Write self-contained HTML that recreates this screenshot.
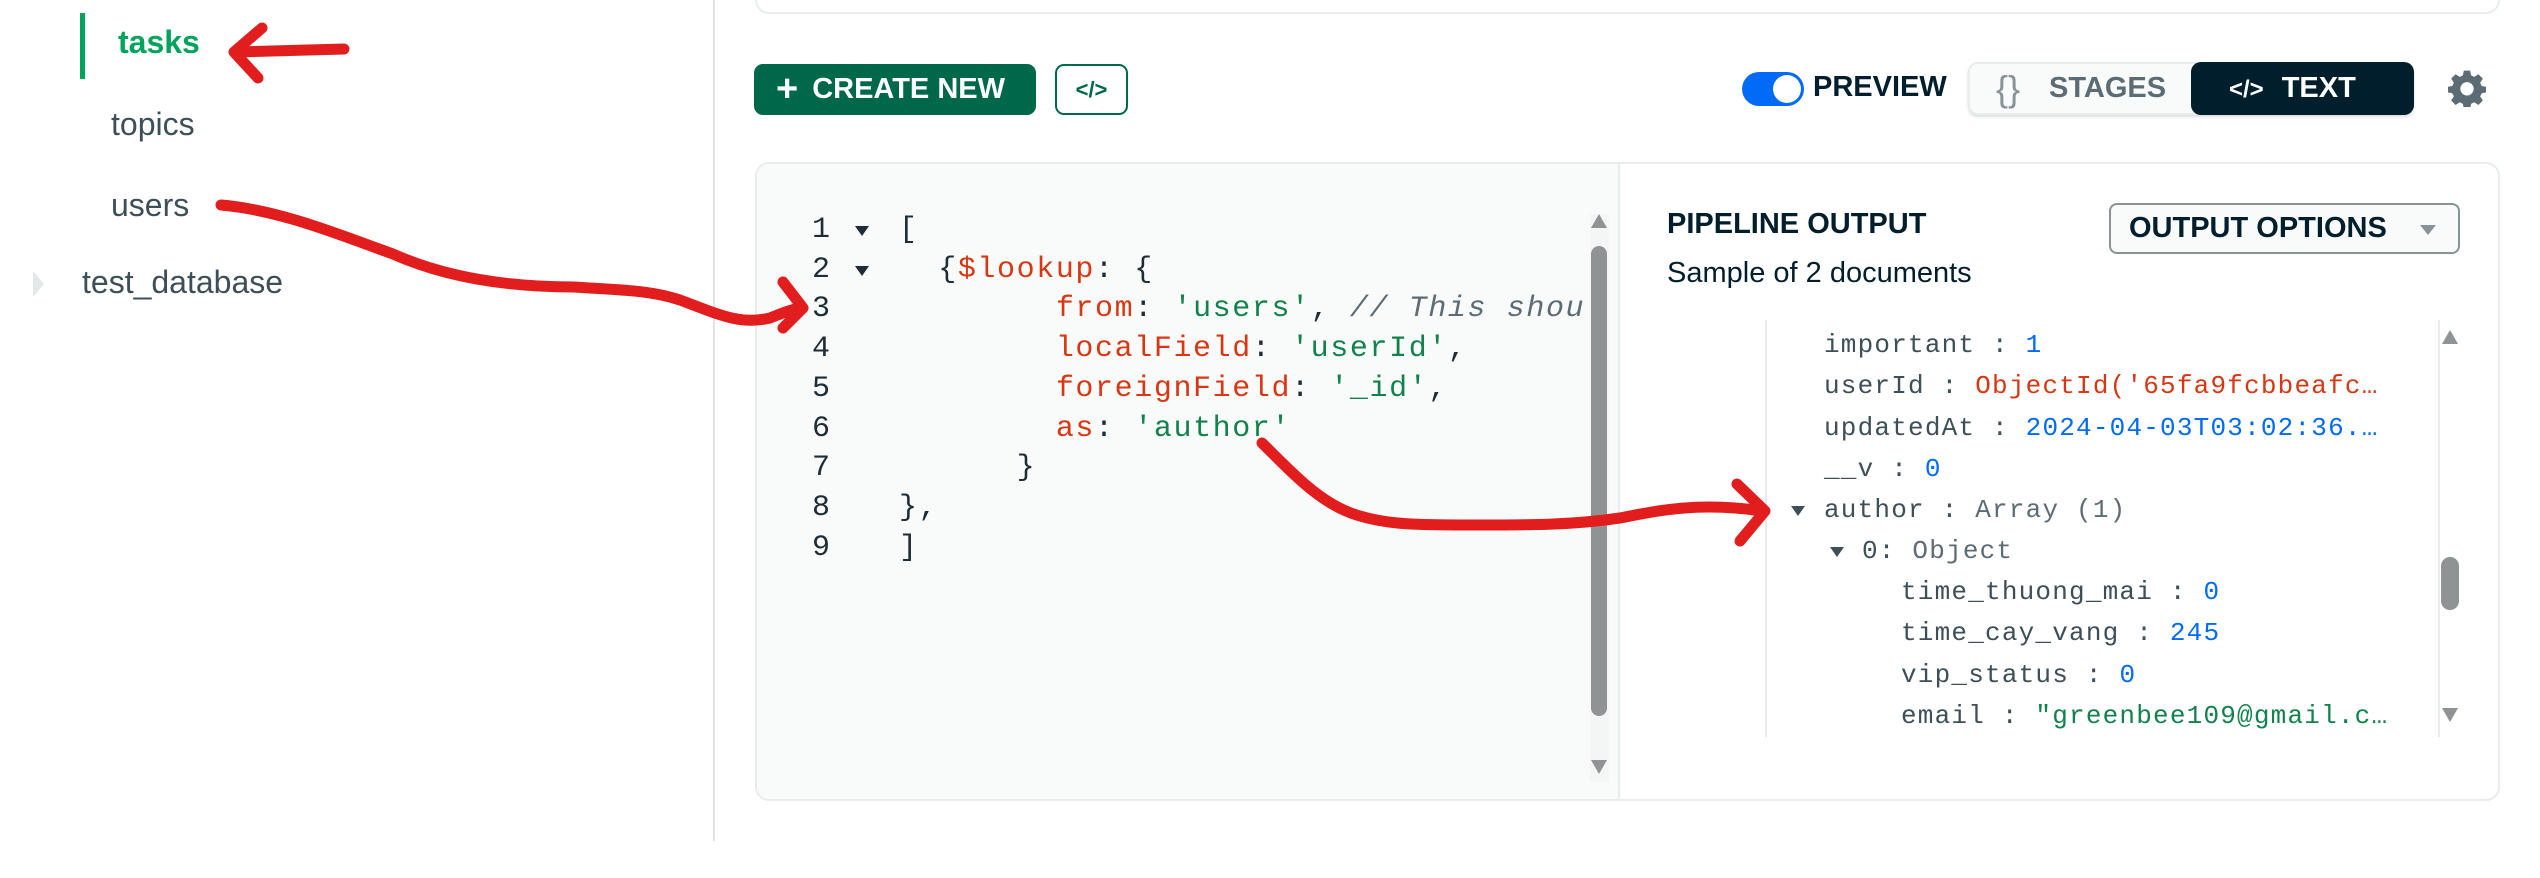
<!DOCTYPE html>
<html><head><meta charset="utf-8"><style>
*{margin:0;padding:0;box-sizing:border-box}
body{width:2540px;height:878px;background:#fff;position:relative;overflow:hidden;font-family:"Liberation Sans",sans-serif;color:#1c2d38}
.a{position:absolute;white-space:nowrap}
.side{font-size:32px;color:#3d4f58}
.mono{font-family:"Liberation Mono",monospace}
.code{font-size:30px;letter-spacing:1.6px;line-height:39.7px;color:#1c2d38;white-space:pre}
.r{color:#d83713}.g{color:#12824d}.b{color:#016bf8}.c{color:#5c6c75;font-style:italic}
.out{font-size:26px;letter-spacing:1.2px;line-height:41.3px;color:#3d4f58}
</style></head><body>
<!-- sidebar -->
<div class="a" style="left:80px;top:13px;width:5px;height:66px;background:#00a35c"></div>
<div class="a side" style="left:118px;top:24px;color:#00a35c;font-weight:bold">tasks</div>
<div class="a side" style="left:111px;top:106px">topics</div>
<div class="a side" style="left:111px;top:187px">users</div>
<div class="a" style="left:33px;top:271px;width:0;height:0;border-left:11px solid #e3e8e9;border-top:13px solid transparent;border-bottom:13px solid transparent"></div>
<div class="a side" style="left:82px;top:264px">test_database</div>
<div class="a" style="left:713px;top:0;width:2px;height:841px;background:#e0e3e4"></div>
<!-- top card -->
<div class="a" style="left:755px;top:-20px;width:1745px;height:34px;border:2px solid #e8edeb;border-radius:14px"></div>
<!-- toolbar -->
<div class="a" style="left:754px;top:64px;width:282px;height:51px;background:#00684a;border-radius:9px;color:#fff;font-weight:bold;font-size:29px;line-height:51px;padding-left:22px"><span style="font-size:38px;vertical-align:-3px;margin-right:14px">+</span>CREATE NEW</div>
<div class="a" style="left:1055px;top:64px;width:73px;height:51px;border:2px solid #00684a;border-radius:9px;color:#00684a;font-weight:bold;font-size:22px;line-height:47px;text-align:center">&lt;/&gt;</div>
<div class="a" style="left:1742px;top:72px;width:62px;height:34px;background:#016bf8;border-radius:17px"><div style="position:absolute;right:3px;top:3px;width:28px;height:28px;background:#fff;border-radius:50%"></div></div>
<div class="a" style="left:1813px;top:71px;font-size:29px;font-weight:bold;color:#001e2b">PREVIEW</div>
<div class="a" style="left:1968px;top:62px;width:446px;height:53px;background:#f9fbfa;border:2px solid #e8edeb;border-radius:10px;box-shadow:0 2px 3px #ddd"></div>
<div class="a" style="left:1996px;top:68px;font-size:36px;color:#889397">{}</div>
<div class="a" style="left:2049px;top:72px;font-size:29px;font-weight:bold;color:#5c6c75">STAGES</div>
<div class="a" style="left:2191px;top:62px;width:223px;height:53px;background:#001e2b;border-radius:10px;color:#fff;font-weight:bold;font-size:29px;line-height:53px;padding-left:38px"><span style="font-size:24px;margin-right:18px">&lt;/&gt;</span>TEXT</div>
<svg class="a" style="left:2448px;top:69px" width="38" height="38" viewBox="0 0 24 24"><path fill="#5c6c75" d="M10 1h4l.6 3 2 1 2.6-1.7 2.8 2.8L20.3 8.7l1 2 3 .6v3.4l-3 .6-1 2 1.7 2.6-2.8 2.8-2.6-1.7-2 1-.6 3h-4l-.6-3-2-1-2.6 1.7-2.8-2.8 1.7-2.6-1-2-3-.6v-3.4l3-.6 1-2L2 6.1 4.8 3.3 7.4 5l2-1z"/><circle cx="12" cy="12.5" r="4.2" fill="#fff"/></svg>
<!-- main card -->
<div class="a" style="left:755px;top:162px;width:1745px;height:639px;border:2px solid #e8edeb;border-radius:14px;overflow:hidden">
<div style="position:absolute;left:0;top:0;width:863px;height:100%;background:#f9fbfa;border-right:2px solid #e8edeb"></div>
</div>
<div class="a mono code" style="left:812px;top:211px">1
2
3
4
5
6
7
8
9</div>
<div class="a" style="left:855px;top:226px;border-left:7px solid transparent;border-right:7px solid transparent;border-top:10px solid #1c2d38"></div>
<div class="a" style="left:855px;top:266px;border-left:7px solid transparent;border-right:7px solid transparent;border-top:10px solid #1c2d38"></div>
<div class="a mono code" style="left:899px;top:211px;width:686px;overflow:hidden">[
  {<span class="r">$lookup</span>: {
        <span class="r">from</span>: <span class="g">'users'</span>, <span class="c">// This should</span>
        <span class="r">localField</span>: <span class="g">'userId'</span>,
        <span class="r">foreignField</span>: <span class="g">'_id'</span>,
        <span class="r">as</span>: <span class="g">'author'</span>
      }
},
]</div>
<div class="a" style="left:1590px;top:214px;width:19px;height:568px;background:#f4f6f6"></div>
<div class="a" style="left:1591px;top:246px;width:16px;height:470px;background:#8f9394;border-radius:8px"></div>
<div class="a" style="left:1591px;top:214px;border-left:8px solid transparent;border-right:8px solid transparent;border-bottom:14px solid #8f9394"></div>
<div class="a" style="left:1591px;top:760px;border-left:8px solid transparent;border-right:8px solid transparent;border-top:14px solid #8f9394"></div>
<!-- output -->
<div class="a" style="left:1667px;top:208px;font-size:29px;font-weight:bold;color:#001e2b">PIPELINE OUTPUT</div>
<div class="a" style="left:1667px;top:257px;font-size:29px;color:#001e2b">Sample of 2 documents</div>
<div class="a" style="left:2109px;top:203px;width:351px;height:51px;border:2px solid #889397;border-radius:8px;font-size:29px;font-weight:bold;color:#001e2b;line-height:47px;padding-left:18px;background:#f9fbfa">OUTPUT OPTIONS<span style="position:absolute;right:22px;top:20px;border-left:8px solid transparent;border-right:8px solid transparent;border-top:10px solid #889397"></span></div>
<div class="a" style="left:1765px;top:320px;width:2px;height:417px;background:#e8edeb"></div>
<div class="a" style="left:2438px;top:320px;width:2px;height:417px;background:#e8edeb"></div>
<div class="a mono out" style="left:1824px;top:325px">important : <span class="b">1</span><br>userId : <span class="r">ObjectId('65fa9fcbbeafc…</span><br>updatedAt : <span class="b">2024-04-03T03:02:36.…</span><br>__v : <span class="b">0</span><br>author : <span style="color:#5c6c75">Array (1)</span></div>
<div class="a mono out" style="left:1862px;top:531px">0: <span style="color:#5c6c75">Object</span></div>
<div class="a mono out" style="left:1901px;top:572px">time_thuong_mai : <span class="b">0</span><br>time_cay_vang : <span class="b">245</span><br>vip_status : <span class="b">0</span><br>email : <span class="g">"greenbee109@gmail.c…</span></div>
<div class="a" style="left:1791px;top:506px;border-left:7px solid transparent;border-right:7px solid transparent;border-top:10px solid #3d4f58"></div>
<div class="a" style="left:1830px;top:547px;border-left:7px solid transparent;border-right:7px solid transparent;border-top:10px solid #3d4f58"></div>
<div class="a" style="left:2441px;top:557px;width:18px;height:53px;background:#8f9394;border-radius:9px"></div>
<div class="a" style="left:2442px;top:330px;border-left:8px solid transparent;border-right:8px solid transparent;border-bottom:14px solid #8f9394"></div>
<div class="a" style="left:2442px;top:708px;border-left:8px solid transparent;border-right:8px solid transparent;border-top:14px solid #8f9394"></div>
<!-- annotations -->
<svg class="a" style="left:0;top:0" width="2540" height="878" fill="none" stroke="#e21d1d" stroke-width="11" stroke-linecap="round" stroke-linejoin="round">
<path d="M344 49 L236 52 M262 28 L234 52 L258 78"/>
<path d="M221 205 C280 210 340 235 393 254 C440 275 500 287 574 287 C620 290 650 290 680 300 C720 315 740 325 770 318 C785 312 795 308 803 308 M783 282 L803 308 L783 328"/>
<path d="M1262 443 C1290 470 1320 505 1360 516 C1390 525 1420 525 1480 525 C1530 525 1573 525 1620 518 C1660 510 1700 502 1762 511 M1737 484 L1765 511 L1740 541"/>
</svg>
</body></html>
